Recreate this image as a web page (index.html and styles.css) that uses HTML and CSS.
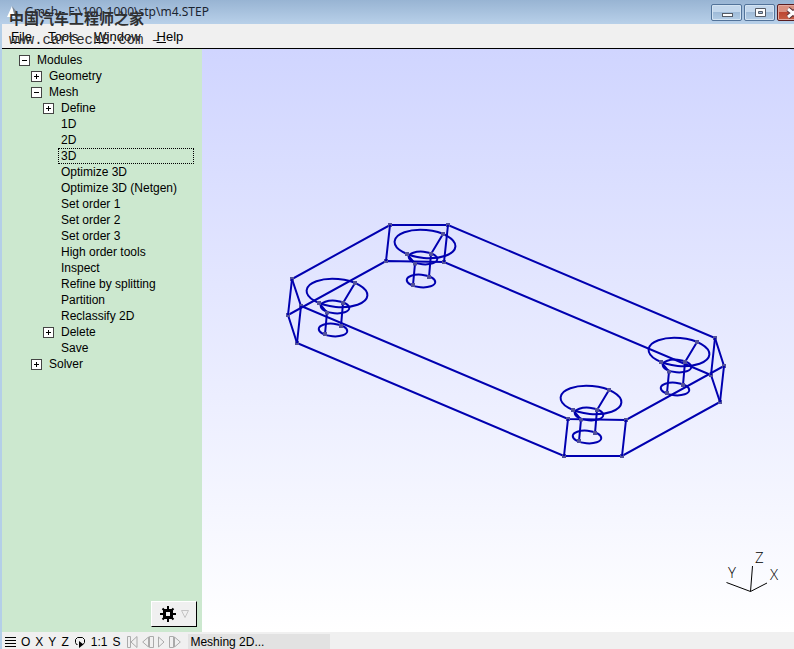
FILE: index.html
```html
<!DOCTYPE html>
<html lang="en">
<head>
    <meta charset="UTF-8">
    <meta name="viewport" content="width=device-width, initial-scale=1.0">
    <title>Gmsh - F:\100-1000\stp\m4.STEP</title>
    <link rel="stylesheet" href="styles.css">
</head>
<body>
    <header class="titlebar">
        <svg class="app-icon" width="16" height="16" viewBox="0 0 16 16"><path d="M0 13L5 2L8 13Z" fill="#fff"/><path d="M5 2L14 13H8Z" fill="#7d8794"/></svg>
        <h1 class="title">Gmsh - F:\100-1000\stp\m4.STEP</h1>
        <div class="window-buttons">
            <button class="win-btn" aria-label="Minimize"><svg width="12" height="12" viewBox="0 0 12 12"><rect x="1.5" y="6.5" width="10" height="3" fill="#fff" stroke="#555b66"/></svg></button>
            <button class="win-btn" aria-label="Maximize"><svg width="12" height="12" viewBox="0 0 12 12"><path d="M1.5 1.5h10v8h-10z M4.5 4.5v2h4v-2z" fill="#fff" fill-rule="evenodd" stroke="#555b66"/></svg></button>
            <button class="win-btn close" aria-label="Close"><svg width="14" height="12" viewBox="0 0 14 12"><path d="M2 2L12 10M12 2L2 10" stroke="#5b3238" stroke-width="5"/><path d="M2 2L12 10M12 2L2 10" stroke="#fff" stroke-width="3"/></svg></button>
        </div>
    </header>

    <div class="watermark">
        <p class="mark-name" lang="zh">中国汽车工程师之家</p>
        <p class="mark-url">www.cartech8.com <span class="mark-dash">–</span></p>
    </div>

    <div class="frame">
        <nav class="menubar">
            <button><u>F</u>ile</button>
            <button><u>T</u>ools</button>
            <button><u>W</u>indow</button>
            <button><u>H</u>elp</button>
        </nav>

        <main class="workspace">
            <aside class="sidebar">
                <ul class="tree">
                    <li><button class="row"><span class="box minus"></span>Modules</button>
                        <ul>
                            <li><button class="row"><span class="box plus"></span>Geometry</button></li>
                            <li><button class="row"><span class="box minus"></span>Mesh</button>
                                <ul>
                                    <li><button class="row"><span class="box plus"></span>Define</button></li>
                                    <li><button class="row leaf">1D</button></li>
                                    <li><button class="row leaf">2D</button></li>
                                    <li><button class="row leaf selected">3D</button></li>
                                    <li><button class="row leaf">Optimize 3D</button></li>
                                    <li><button class="row leaf">Optimize 3D (Netgen)</button></li>
                                    <li><button class="row leaf">Set order 1</button></li>
                                    <li><button class="row leaf">Set order 2</button></li>
                                    <li><button class="row leaf">Set order 3</button></li>
                                    <li><button class="row leaf">High order tools</button></li>
                                    <li><button class="row leaf">Inspect</button></li>
                                    <li><button class="row leaf">Refine by splitting</button></li>
                                    <li><button class="row leaf">Partition</button></li>
                                    <li><button class="row leaf">Reclassify 2D</button></li>
                                    <li><button class="row"><span class="box plus"></span>Delete</button></li>
                                    <li><button class="row leaf">Save</button></li>
                                </ul>
                            </li>
                            <li><button class="row"><span class="box plus"></span>Solver</button></li>
                        </ul>
                    </li>
                </ul>
                <button class="gear" aria-label="Options">
                    <svg width="16" height="16" viewBox="0 0 16 16"><path d="M8 0V16M0 8H16M2.5 2.5L13.5 13.5M13.5 2.5L2.5 13.5" stroke="#000" stroke-width="2"/><rect x="4.5" y="4.5" width="7" height="7" fill="#f0f0f0" stroke="#000" stroke-width="3"/></svg>
                    <svg width="8" height="8" viewBox="0 0 8 8"><path d="M.5 .5H7.5L4 7.5Z" fill="none" stroke="#c4c4c4"/></svg>
                </button>
            </aside>

            <section class="viewport">
                <svg class="model" viewBox="202 49 592 583" role="img" aria-label="Model wireframe">
                    <defs>
                        <marker id="point" markerUnits="userSpaceOnUse" markerWidth="4" markerHeight="4" refX="2" refY="2">
                            <rect width="4" height="4" fill="#50509c"/>
                        </marker>
                        <!-- countersunk hole -->
                        <g id="hole">
                            <ellipse cx="425" cy="244" rx="30.5" ry="14" transform="rotate(5 425 244)"/>
                            <ellipse cx="423" cy="258" rx="14.3" ry="6.3" transform="rotate(5 423 258)"/>
                            <ellipse cx="421" cy="281" rx="14.3" ry="6.3" transform="rotate(5 421 281)"/>
                            <path class="pts" d="M443 234L431 254L429 277"/>
                            <path class="pts" d="M407 254L415 263.5L413 285"/>
                        </g>
                    </defs>
                    <g class="wire">
                        <path class="pts" d="M390 225L448 225L715 338L724 366L626 420L568 419L301 306L292 279Z"/>
                        <path class="pts" d="M386 261L444 262L711 375L720 402L622 456L564 456L297 343L288 315Z"/>
                        <path d="M390 225L386 261M448 225L444 262M715 338L711 375M724 366L720 402M626 420L622 456M568 419L564 456M301 306L297 343M292 279L288 315"/>
                        <use href="#hole"/>
                        <use href="#hole" x="-88" y="49"/>
                        <use href="#hole" x="254" y="108"/>
                        <use href="#hole" x="166" y="156"/>
                    </g>
                    <path class="axes" d="M726.5 582.5L750.5 591.5L767 583M750.5 591.5L752.5 566"/>
                    <g class="axis-names">
                        <text x="728" y="578">Y</text>
                        <text x="755" y="563">Z</text>
                        <text x="770" y="580">X</text>
                    </g>
                </svg>
            </section>
        </main>

        <footer class="statusbar">
            <button aria-label="Menu"><svg width="11" height="12" viewBox="0 0 11 12"><path d="M0 1.5H11M0 4.5H11M0 7.5H11M0 10.5H11" stroke="#000"/></svg></button>
            <button>O</button>
            <button>X</button>
            <button>Y</button>
            <button>Z</button>
            <button aria-label="Rotate"><svg width="12" height="12" viewBox="0 0 12 12"><path d="M3.5 8.5H2.5L1.5 6.5V3.5L3.5 1.5H8.5L10.5 3.5V6.5L9 8.5" fill="none" stroke="#000"/><path d="M5 5L9.5 8.5L5 12Z"/></svg></button>
            <button>1:1</button>
            <button>S</button>
            <div class="player">
                <button aria-label="First"><svg width="11" height="12" viewBox="0 0 11 12"><path d="M.5 .5H3.5V11.5H.5ZM10 .5V11.5L4 6Z"/></svg></button>
                <button aria-label="Back"><svg width="12" height="12" viewBox="0 0 12 12"><path d="M6.5 1V11L.7 6ZM7.5 .5H11.5V11.5H7.5Z"/></svg></button>
                <button aria-label="Play"><svg width="7" height="12" viewBox="0 0 7 12"><path d="M.5 1V11L6 6Z"/></svg></button>
                <button aria-label="Forward"><svg width="12" height="12" viewBox="0 0 12 12"><path d="M.5 .5H4.5V11.5H.5ZM5.5 1V11L11.3 6Z"/></svg></button>
            </div>
            <output class="message">Meshing 2D...</output>
        </footer>
    </div>
</body>
</html>
```

FILE: styles.css
```css
* {
    box-sizing: border-box;
}
body {
    margin: 0;
    height: 100vh;
    display: flex;
    flex-direction: column;
    overflow: hidden;
    font-family: "Liberation Sans", Arial, sans-serif;
    font-size: 12px;
    color: #000;
    background: #b4cfe8;
}
button {
    padding: 0;
    border: none;
    background: none;
    font: inherit;
    color: inherit;
}
svg {
    display: block;
}
.titlebar {
    display: flex;
    align-items: center;
    height: 24px;
    flex: none;
    padding-left: 7px;
    background: linear-gradient(#98b4d3, #b8d0e9);
    overflow: hidden;
}
.title {
    flex: 1;
    margin: 0 0 0 2px;
    font-family: "Noto Sans", sans-serif;
    font-size: 12px;
    font-weight: normal;
    line-height: 26px;
    color: #1a2430;
}
.window-buttons {
    display: flex;
    gap: 2px;
    margin-right: -14px;
    align-self: flex-start;
    padding-top: 4px;
}
.win-btn {
    display: flex;
    align-items: center;
    justify-content: center;
    width: 31px;
    height: 17px;
    border: 1px solid #52739a;
    border-radius: 2px;
    background: linear-gradient(#c3d7ec 45%, #9fbbd8 50%, #b3cce5);
    box-shadow: inset 0 0 0 1px #d3e3f2;
}
.close {
    border-color: #5a1d20;
    background: linear-gradient(#d99080 45%, #bd4631 50%, #c65e45);
    box-shadow: inset 0 0 0 1px #e3aaa0;
}
.watermark {
    position: absolute;
    left: 9px;
    top: 8px;
    color: #303030;
    pointer-events: none;
}
.watermark p {
    margin: 0;
    white-space: pre;
}
.mark-name {
    font-family: "Noto Sans CJK SC", sans-serif;
    font-size: 15px;
    font-weight: bold;
    line-height: 20px;
}
.mark-url {
    font-family: "Liberation Mono", monospace;
    font-size: 14px;
    line-height: 24px;
}
.frame {
    flex: 1;
    display: flex;
    flex-direction: column;
    min-height: 0;
    margin-left: 2px;
}
.menubar {
    display: flex;
    gap: 16px;
    height: 25px;
    flex: none;
    padding-left: 9px;
    border-bottom: 1px solid #000;
    font-size: 13px;
    background: #f0f0f0;
}
.workspace {
    flex: 1;
    display: flex;
    min-height: 0;
}
.sidebar {
    display: flex;
    flex-direction: column;
    justify-content: space-between;
    width: 200px;
    flex: none;
    padding: 3px 5px 5px 17px;
    background: #cce8cf;
}
.tree,
.tree ul {
    margin: 0;
    padding: 0;
    list-style: none;
}
.tree ul {
    padding-left: 12px;
}
.tree {
    padding-right: 3px;
}
.row {
    display: flex;
    align-items: center;
    gap: 7px;
    width: 100%;
    height: 16px;
    white-space: nowrap;
}
.leaf {
    width: calc(100% - 15px);
    margin-left: 15px;
    padding-left: 2px;
    border: 1px solid transparent;
}
.selected {
    border: 1px dotted #000;
}
.box {
    width: 11px;
    height: 11px;
    border: 1px solid #444;
    background: linear-gradient(#000, #000) center / 5px 1px no-repeat, #fff;
}
.plus {
    background: linear-gradient(#000, #000) center / 5px 1px no-repeat, linear-gradient(#000, #000) center / 1px 5px no-repeat, #fff;
}
.gear {
    display: flex;
    align-items: center;
    justify-content: center;
    gap: 5px;
    align-self: flex-end;
    width: 46px;
    height: 26px;
    border: 1px solid #000;
    border-top-color: #fff;
    border-left-color: #fff;
    background: #f0f0f0;
}
.viewport {
    flex: 1;
    min-width: 0;
    background: linear-gradient(#d0d5ff, #fff);
}
.model {
    width: 100%;
    height: 100%;
}
.wire {
    fill: none;
    stroke: #0000b0;
    stroke-width: 2;
}
.pts {
    marker-start: url(#point);
    marker-mid: url(#point);
    marker-end: url(#point);
}
.axes {
    fill: none;
    stroke: #000;
}
.axis-names {
    font-family: "Open Sans", sans-serif;
    font-size: 15px;
    font-weight: 300;
}
.statusbar {
    display: flex;
    align-items: center;
    gap: 5px;
    height: 17px;
    flex: none;
    padding: 2px 0 0 3px;
    background: #f0f0f0;
}
.player {
    display: flex;
    gap: 4px;
    padding: 0 2px;
}
.player path {
    fill: none;
    stroke: #aaa;
}
.message {
    width: 142px;
    height: 15px;
    padding-left: 2px;
    line-height: 17px;
    background: #e2e2e2;
}
```
